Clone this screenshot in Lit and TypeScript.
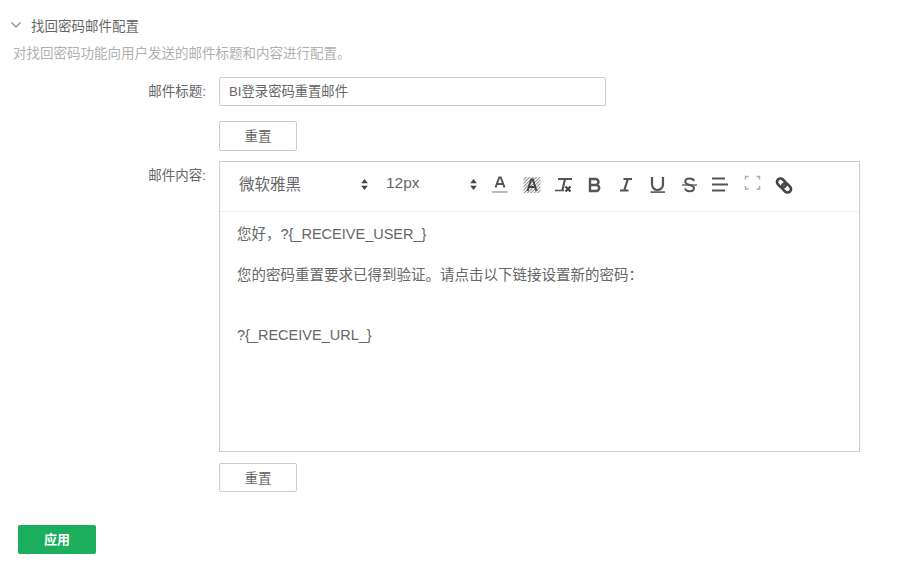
import { LitElement, html, css, svg } from "lit";
import { customElement } from "lit/decorators.js";

const sorter = html`<svg class="sort" width="7" height="13" viewBox="0 0 7 13"><path d="M3.500 1 6.800 5.200H.2zM3.500 12 .2 7.800h6.600z" fill="#444"/></svg>`;

const icons = [
  svg`<path d="M5.500 13.500 9.200 3.500h1.600l3.700 10M7 10h6" fill="none" stroke="#555" stroke-width="2"/><rect x="2" y="17" width="15.500" height="2" fill="#bbb"/>`,
  svg`<defs><pattern id="hatch" width="2.400" height="2.400" patternUnits="userSpaceOnUse" patternTransform="rotate(45)"><rect width="1" height="2.400" fill="#888"/></pattern></defs><rect x="1.500" y="3" width="17" height="16" fill="url(#hatch)"/><path d="M5.500 17 9.200 5.500h1.600L14.500 17M7 13h6" fill="none" stroke="#444" stroke-width="2"/>`,
  svg`<path d="M5 5h14M12 5 9.500 16" fill="none" stroke="#555" stroke-width="2.200"/><path d="M2 16.500h9" stroke="#555" stroke-width="1.600"/><path d="M12.500 12.500l5 5M17.500 12.500l-5 5" stroke="#444" stroke-width="2.200"/>`,
  svg`<path d="M5 5h5.500a3 3 0 0 1 0 6H5zM5 11h6.200a3 3 0 0 1 0 6H5z" fill="none" stroke="#555" stroke-width="2.400"/>`,
  svg`<path d="M7.500 5H16M4 16.500h8.500M11.800 5 8.200 16.500" fill="none" stroke="#555" stroke-width="2.200"/>`,
  svg`<path d="M4 3v7.500a5.500 5.500 0 0 0 11 0V3" fill="none" stroke="#555" stroke-width="2.200"/><rect x="2.500" y="17.300" width="14.500" height="1.600" fill="#555"/>`,
  svg`<path d="M14 7C13.500 5.200 12 4.500 9.500 4.500 7 4.500 5.300 5.700 5.300 7.500c0 4.500 8.700 2.500 8.700 6.500 0 2-1.800 3.200-4.500 3.200-2.300 0-3.900-1-4.500-2.700" fill="none" stroke="#555" stroke-width="2"/><path d="M2 11h15" stroke="#555" stroke-width="1.300"/>`,
  svg`<path d="M1 4.500h13M1 10.500h16M1 16.500h13" fill="none" stroke="#555" stroke-width="2.200"/>`,
  svg`<path d="M2.500 5.500V2.500h3M13.500 2.500h3v3M16.500 12v3h-3M5.500 15h-3v-3" fill="none" stroke="#aaa" stroke-width="1.500"/>`,
  svg`<g fill="none" stroke="#444" stroke-width="2.600" transform="rotate(45 10 11.500)"><rect x="1.500" y="8" width="10" height="7" rx="3.500"/><rect x="8.500" y="8" width="10" height="7" rx="3.500"/></g>`,
];

@customElement("app-root")
export class AppRoot extends LitElement {
  static styles = css`
    :host {
      display: block;
      width: 919px;
      height: 581px;
      background: #fff;
      color: #666;
      font-family: "Liberation Sans", "Noto Sans CJK SC", sans-serif;
      font-size: 13px;
      overflow: hidden;
    }
    .page {
      display: flex;
      flex-direction: column;
      padding: 16px 0 0 13px;
    }
    .head {
      display: flex;
      align-items: center;
      height: 17px;
      gap: 10px;
      font-size: 13.5px;
    }
    .chev {
      display: block;
      margin-left: -2px;
    }
    .desc {
      margin-top: 12px;
      height: 17px;
      line-height: 17px;
      font-size: 13.500px;
      color: #b0b0b0;
    }
    .row {
      display: grid;
      grid-template-columns: 193px 1fr;
      column-gap: 13px;
    }
    .r1 {
      margin-top: 15px;
    }
    .label {
      text-align: right;
      font-size: 13.500px;
      line-height: 29px;
    }
    .lab2 {
      line-height: 30px;
    }
    .input {
      box-sizing: border-box;
      width: 387px;
      height: 29px;
      border: 1px solid #ccc;
      border-radius: 2px;
      padding-left: 9px;
      line-height: 27px;
      font-size: 13.300px;
    }
    .btn {
      box-sizing: border-box;
      width: 78px;
      height: 29px;
      border: 1px solid #ccc;
      border-radius: 2px;
      background: #fff;
      text-align: center;
      line-height: 29px;
      font-size: 13.500px;
    }
    .b1 {
      margin-top: 15px;
      height: 30px;
    }
    .b2 {
      margin-top: 11px;
    }
    .r2 {
      margin-top: 10px;
    }
    .editor {
      box-sizing: border-box;
      width: 641px;
      height: 291px;
      border: 1px solid #ccc;
    }
    .toolbar {
      display: flex;
      align-items: center;
      box-sizing: border-box;
      height: 50px;
      border-bottom: 1px solid #eee;
      padding-left: 19px;
      padding-bottom: 5px;
      font-size: 15.500px;
    }
    .sel {
      display: flex;
      align-items: center;
      justify-content: space-between;
    }
    .sel span {
      position: relative;
      top: -1px;
    }
    .s1 {
      width: 129px;
    }
    .s2 {
      width: 91px;
      margin-left: 18px;
    }
    .sort {
      display: block;
    }
    .tools {
      display: flex;
      gap: 11.600px;
      margin-left: 13px;
    }
    .tools svg {
      display: block;
      width: 20px;
      height: 20px;
    }
    .content {
      padding: 14px 17px;
      font-size: 14.500px;
      line-height: 17px;
    }
    .content p {
      margin: 0;
      height: 17px;
    }
    .content .second {
      margin-top: 24px;
    }
    .content .blank,
    .content .last {
      margin-top: 13px;
    }
    .apply {
      box-sizing: border-box;
      width: 78px;
      height: 29px;
      margin: 33px 0 0 5px;
      border-radius: 2px;
      background: #1aae5d;
      color: #fff;
      font-weight: 700;
      font-size: 13px;
      text-align: center;
      line-height: 29px;
    }
  `;

  render() {
    return html`
      <div class="page">
        <div class="head">
          <svg class="chev" width="10" height="6" viewBox="0 0 10 6"><path d="M.5.5 5 5 9.500.5" fill="none" stroke="#888" stroke-width="1.100"/></svg>
          <span>找回密码邮件配置</span>
        </div>
        <div class="desc">对找回密码功能向用户发送的邮件标题和内容进行配置。</div>
        <div class="row r1">
          <div class="label">邮件标题:</div>
          <div>
            <div class="input">BI登录密码重置邮件</div>
            <div class="btn b1">重置</div>
          </div>
        </div>
        <div class="row r2">
          <div class="label lab2">邮件内容:</div>
          <div>
            <div class="editor">
              <div class="toolbar">
                <div class="sel s1"><span>微软雅黑</span>${sorter}</div>
                <div class="sel s2"><span>12px</span>${sorter}</div>
                <div class="tools">
                  ${icons.map((i) => html`<svg viewBox="0 0 20 20">${i}</svg>`)}
                </div>
              </div>
              <div class="content">
                <p>您好，?{_RECEIVE_USER_}</p>
                <p class="second">您的密码重置要求已得到验证。请点击以下链接设置新的密码：</p>
                <p class="blank"></p>
                <p class="last">?{_RECEIVE_URL_}</p>
              </div>
            </div>
            <div class="btn b2">重置</div>
          </div>
        </div>
        <div class="apply">应用</div>
      </div>
    `;
  }
}
